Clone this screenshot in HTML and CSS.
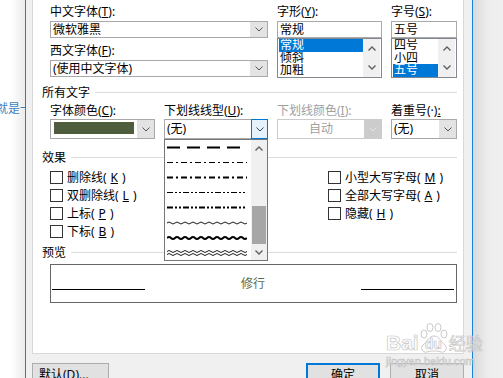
FILE: index.html
```html
<!DOCTYPE html>
<html lang="zh-CN">
<head>
  <meta charset="UTF-8" />
  <title>字体</title>
  <link rel="stylesheet" href="styles.css">
</head>
<body>
  <div class="doc"><p class="doc-text">就是一个</p></div>

  <div class="dialog">
    <div class="panel">
      <div class="font-row">
        <div class="col col-cn">
          <div class="label">中文字体(<u>T</u>):</div>
          <div class="combo">
            <span class="combo-text">微软雅黑</span>
            <span class="combo-btn"><svg width="8" height="5" viewBox="0 0 8 5"><path d="M0.5 0.5L4 4L7.5 0.5" fill="none" stroke="#555"/></svg></span>
          </div>
          <div class="label label-gap">西文字体(<u>F</u>):</div>
          <div class="combo">
            <span class="combo-text">(使用中文字体)</span>
            <span class="combo-btn"><svg width="8" height="5" viewBox="0 0 8 5"><path d="M0.5 0.5L4 4L7.5 0.5" fill="none" stroke="#555"/></svg></span>
          </div>
        </div>

        <div class="col col-style">
          <div class="label">字形(<u>Y</u>):</div>
          <div class="edit">常规</div>
          <div class="listbox">
            <ul class="list-items">
              <li class="selected">常规</li>
              <li>倾斜</li>
              <li>加粗</li>
            </ul>
            <div class="vscroll">
              <span><svg width="8" height="5" viewBox="0 0 8 5"><path d="M0.5 4.5L4 1L7.5 4.5" fill="none" stroke="#606060" stroke-width="1.4"/></svg></span>
              <span><svg width="8" height="5" viewBox="0 0 8 5"><path d="M0.5 0.5L4 4L7.5 0.5" fill="none" stroke="#606060" stroke-width="1.4"/></svg></span>
            </div>
          </div>
        </div>

        <div class="col col-size">
          <div class="label">字号(<u>S</u>):</div>
          <div class="edit">五号</div>
          <div class="listbox">
            <ul class="list-items">
              <li>四号</li>
              <li>小四</li>
              <li class="selected">五号</li>
            </ul>
            <div class="vscroll">
              <span><svg width="8" height="5" viewBox="0 0 8 5"><path d="M0.5 4.5L4 1L7.5 4.5" fill="none" stroke="#606060" stroke-width="1.4"/></svg></span>
              <span><svg width="8" height="5" viewBox="0 0 8 5"><path d="M0.5 0.5L4 4L7.5 0.5" fill="none" stroke="#606060" stroke-width="1.4"/></svg></span>
            </div>
          </div>
        </div>
      </div>

      <div class="group-title group-all">所有文字</div>

      <div class="attr-row">
        <div class="field">
          <div class="label">字体颜色(<u>C</u>):</div>
          <div class="combo combo-tall">
            <span class="swatch"></span>
            <span class="combo-btn"><svg width="8" height="5" viewBox="0 0 8 5"><path d="M0.5 0.5L4 4L7.5 0.5" fill="none" stroke="#555"/></svg></span>
          </div>
        </div>

        <div class="field">
          <div class="label">下划线线型(<u>U</u>):</div>
          <div class="combo combo-tall combo-open">
            <span class="combo-text">(无)</span>
            <span class="combo-btn focus"><svg width="8" height="5" viewBox="0 0 8 5"><path d="M0.5 0.5L4 4L7.5 0.5" fill="none" stroke="#444"/></svg></span>

            <div class="dropdown">
              <div class="dd-list">
                <div class="dd-item"><svg width="80" height="7"><line x1="0" y1="3.5" x2="80" y2="3.5" stroke="#000" stroke-width="2" stroke-dasharray="13 7"/></svg></div>
                <div class="dd-item"><svg width="80" height="7"><line x1="0" y1="3.5" x2="80" y2="3.5" stroke="#000" stroke-width="1" stroke-dasharray="6 3 2 3"/></svg></div>
                <div class="dd-item"><svg width="80" height="7"><line x1="0" y1="3.5" x2="80" y2="3.5" stroke="#000" stroke-width="2" stroke-dasharray="6 3 2 3"/></svg></div>
                <div class="dd-item"><svg width="80" height="7"><line x1="0" y1="3.5" x2="80" y2="3.5" stroke="#000" stroke-width="1" stroke-dasharray="6 2 2 2 2 2"/></svg></div>
                <div class="dd-item"><svg width="80" height="7"><line x1="0" y1="3.5" x2="80" y2="3.5" stroke="#000" stroke-width="2" stroke-dasharray="6 2 2 2 2 2"/></svg></div>
                <div class="dd-item"><svg width="80" height="7"><path d="M0 4q2-2 4 0t4 0t4 0t4 0t4 0t4 0t4 0t4 0t4 0t4 0t4 0t4 0t4 0t4 0t4 0t4 0t4 0t4 0t4 0t4 0" fill="none" stroke="#000" stroke-width="0.9"/></svg></div>
                <div class="dd-item"><svg width="80" height="7"><path d="M0 4q2-2 4 0t4 0t4 0t4 0t4 0t4 0t4 0t4 0t4 0t4 0t4 0t4 0t4 0t4 0t4 0t4 0t4 0t4 0t4 0t4 0" fill="none" stroke="#000" stroke-width="2"/></svg></div>
                <div class="dd-item"><svg width="80" height="7"><path d="M0 2.5q2-2 4 0t4 0t4 0t4 0t4 0t4 0t4 0t4 0t4 0t4 0t4 0t4 0t4 0t4 0t4 0t4 0t4 0t4 0t4 0t4 0M0 5.5q2-2 4 0t4 0t4 0t4 0t4 0t4 0t4 0t4 0t4 0t4 0t4 0t4 0t4 0t4 0t4 0t4 0t4 0t4 0t4 0t4 0" fill="none" stroke="#000" stroke-width="0.9"/></svg></div>
              </div>
              <div class="dd-scroll">
                <span class="dd-arrow"><svg width="8" height="5" viewBox="0 0 8 5"><path d="M0.5 4.5L4 1L7.5 4.5" fill="none" stroke="#606060" stroke-width="1.4"/></svg></span>
                <span class="dd-track"><span class="dd-thumb"></span></span>
                <span class="dd-arrow"><svg width="8" height="5" viewBox="0 0 8 5"><path d="M0.5 0.5L4 4L7.5 0.5" fill="none" stroke="#606060" stroke-width="1.4"/></svg></span>
              </div>
            </div>
          </div>
        </div>

        <div class="field">
          <div class="label disabled">下划线颜色(<u>I</u>):</div>
          <div class="combo combo-tall combo-disabled">
            <span class="combo-text centered">自动</span>
            <span class="combo-btn"><svg width="8" height="5" viewBox="0 0 8 5"><path d="M0.5 0.5L4 4L7.5 0.5" fill="none" stroke="#e6e6e6"/></svg></span>
          </div>
        </div>

        <div class="field">
          <div class="label">着重号(·)<u>:</u></div>
          <div class="combo combo-tall">
            <span class="combo-text">(无)</span>
            <span class="combo-btn"><svg width="8" height="5" viewBox="0 0 8 5"><path d="M0.5 0.5L4 4L7.5 0.5" fill="none" stroke="#555"/></svg></span>
          </div>
        </div>
      </div>

      <div class="group-title group-fx">效果</div>

      <div class="effects">
        <div class="check-col">
          <label class="check"><span class="box"></span>删除线(<u>K</u>)</label>
          <label class="check"><span class="box"></span>双删除线(<u>L</u>)</label>
          <label class="check"><span class="box"></span>上标(<u>P</u>)</label>
          <label class="check"><span class="box"></span>下标(<u>B</u>)</label>
        </div>
        <div class="check-col">
          <label class="check"><span class="box"></span>小型大写字母(<u>M</u>)</label>
          <label class="check"><span class="box"></span>全部大写字母(<u>A</u>)</label>
          <label class="check"><span class="box"></span>隐藏(<u>H</u>)</label>
        </div>
      </div>

      <div class="group-title group-pv">预览</div>

      <div class="preview">
        <span class="pv-line"></span>
        <span class="pv-text">修行</span>
        <span class="pv-line"></span>
      </div>
    </div>

    <div class="buttons">
      <div class="btn btn-default">默认(<u>D</u>)...</div>
      <div class="btn btn-ok">确定</div>
      <div class="btn btn-cancel">取消</div>
    </div>

    <div class="watermark">
      <div class="wm-logo">
        <span class="wm-bai">Bai</span>
        <span class="wm-paw">
          <svg width="30" height="30" viewBox="0 0 30 30">
            <ellipse cx="5" cy="11" rx="3" ry="4" fill="none" stroke="#c9c9c9"/>
            <ellipse cx="11" cy="4.5" rx="3" ry="4" fill="none" stroke="#c9c9c9"/>
            <ellipse cx="19" cy="4.5" rx="3" ry="4" fill="none" stroke="#c9c9c9"/>
            <ellipse cx="25" cy="11" rx="3" ry="4" fill="none" stroke="#c9c9c9"/>
            <path d="M15 13c-5 0-7 6-11 9c-3 3-1 8 4 7c3-1 5-1 7-1s4 0 7 1c5 1 7-4 4-7c-4-3-6-9-11-9z" fill="none" stroke="#c9c9c9"/>
          </svg>
          <span class="wm-du">du</span>
        </span>
        <span class="wm-cn">经验</span>
      </div>
      <div class="wm-url">jingyan.baidu.com</div>
    </div>
  </div>

  <div class="shade"></div>
</body>
</html>
```

FILE: styles.css
```css
* {
  box-sizing: border-box;
}

body {
  margin: 0;
  width: 503px;
  height: 378px;
  overflow: hidden;
  display: flex;
  font-family: "Noto Sans", "Noto Sans CJK SC", sans-serif;
  font-size: 12px;
  line-height: 15px;
  color: #000;
  background: #fff;
}

u {
  text-underline-offset: 1px;
}

/* document behind the dialog */
.doc {
  width: 25px;
  flex: none;
  overflow: hidden;
  background: linear-gradient(to right, #fff 45%, #ebebeb);
}

.doc-text {
  margin: 100px 0 0 -4px;
  white-space: nowrap;
  color: #3d7ebf;
  line-height: 17px;
}

.shade {
  flex: 1;
  background: linear-gradient(to right, #dadada, #ededed 50%, #f0f0f0);
}

/* dialog */
.dialog {
  position: relative;
  width: 448px;
  flex: none;
  background: #f0f0f0;
  border-left: 1px solid #1883d7;
  border-right: 1px solid #1883d7;
  padding: 0 8px 0 6px;
}

.panel {
  height: 354px;
  background: #fff;
  border: 1px solid #d9d9d9;
  border-top: none;
  padding: 4px 6px 0 9px;
}

.label {
  height: 15px;
  margin-bottom: 2px;
  white-space: nowrap;
}

.label.disabled {
  color: #a0a0a0;
}

.label-gap {
  margin-top: 5px;
}

/* font row */
.font-row {
  display: flex;
  gap: 9px;
  margin-left: 8px;
}

.col-cn {
  width: 218px;
}

.col-style {
  width: 105px;
}

.col-size {
  width: 66px;
}

.combo {
  display: flex;
  height: 17px;
  border: 1px solid #a9a9a9;
  background: #fff;
}

.combo-text {
  flex: 1;
  padding-left: 2px;
  white-space: nowrap;
  overflow: hidden;
}

.combo-text.centered {
  text-align: center;
  padding-left: 0;
}

.combo-btn {
  width: 17px;
  flex: none;
  background: #e3e3e3;
  display: flex;
  align-items: center;
  justify-content: center;
}

.edit {
  height: 17px;
  border: 1px solid #a9a9a9;
  padding-left: 2px;
}

.listbox {
  display: flex;
  height: 40px;
  border: 1px solid #828790;
  padding: 0 1px;
  overflow: hidden;
}

.list-items {
  flex: 1;
  margin: 0;
  padding: 0;
  list-style: none;
}

.list-items li {
  height: 12.5px;
  line-height: 12px;
  padding-left: 1px;
  overflow: hidden;
}

.list-items li.selected {
  background: #0078d7;
  color: #fff;
}

.vscroll {
  width: 17px;
  display: flex;
  flex-direction: column;
  background: #f0f0f0;
}

.vscroll span {
  flex: 1;
  display: flex;
  align-items: center;
  justify-content: center;
}

/* group headings */
.group-title {
  display: flex;
  align-items: center;
  gap: 5px;
  height: 15px;
  white-space: nowrap;
}

.group-title::after {
  content: "";
  flex: 1;
  height: 1px;
  background: #dcdcdc;
}

.group-all {
  margin-top: 7px;
}

.group-fx {
  margin-top: 11px;
}

.group-pv {
  margin-top: 5px;
}

/* all text row */
.attr-row {
  display: grid;
  grid-template-columns: 105px 104px 105px 66px;
  column-gap: 9px;
  margin: 3px 0 0 8px;
}

.attr-row .label {
  margin-bottom: 1px;
}

.combo-tall {
  height: 20px;
  line-height: 18px;
}

.swatch {
  flex: 1;
  margin: 2px 3px 4px 3px;
  background: #4f5d3f;
}

.combo-open {
  position: relative;
}

.combo-btn.focus {
  width: 17px;
  margin: -1px -1px -1px 0;
  background: #e5f1fb;
  border: 1px solid #0078d7;
}

.combo-disabled {
  border-color: #cccccc;
  color: #a0a0a0;
}

.combo-disabled .combo-btn {
  background: #cccccc;
}

/* open dropdown of underline styles */
.dropdown {
  position: absolute;
  left: -1px;
  top: 19px;
  width: 104px;
  height: 122px;
  display: flex;
  background: #fff;
  border: 1px solid #767676;
  z-index: 2;
}

.dd-list {
  flex: 1;
  padding-left: 2px;
}

.dd-item {
  height: 15px;
  display: flex;
  align-items: center;
}

.dd-item svg {
  display: block;
}

.dd-scroll {
  width: 16px;
  display: flex;
  flex-direction: column;
  background: #f0f0f0;
}

.dd-arrow {
  height: 16px;
  display: flex;
  align-items: center;
  justify-content: center;
}

.dd-track {
  flex: 1;
  display: flex;
  flex-direction: column;
  justify-content: flex-end;
}

.dd-thumb {
  height: 38px;
  margin: 0 1px;
  background: #a6a6a6;
}

/* effects */
.effects {
  display: grid;
  grid-template-columns: 278px 1fr;
  margin: 3px 0 0 8px;
}

.check {
  display: flex;
  align-items: center;
  gap: 4px;
  height: 18px;
  white-space: nowrap;
}

.box {
  width: 13px;
  height: 13px;
  border: 1px solid #333;
  background: #fff;
}

/* preview */
.preview {
  display: flex;
  align-items: center;
  height: 39px;
  margin: 4px 0 0 8px;
  padding: 0 2px 0 1px;
  border: 1px solid #666;
}

.pv-line {
  width: 93px;
  height: 1px;
  margin-top: 11px;
  background: #000;
}

.pv-text {
  flex: 1;
  text-align: center;
  color: #5b6b4b;
}

/* bottom buttons */
.buttons {
  display: flex;
  margin-top: 9px;
}

.btn {
  height: 23px;
  line-height: 21px;
  background: #e1e1e1;
  border: 1px solid #adadad;
  white-space: nowrap;
}

.btn-default {
  width: 77px;
  padding-left: 6px;
}

.btn-ok {
  width: 74px;
  margin-left: auto;
  text-align: center;
  border: 2px solid #0078d7;
  line-height: 19px;
}

.btn-cancel {
  width: 74px;
  margin-left: 10px;
  text-align: center;
}

/* baidu watermark */
.watermark {
  position: absolute;
  left: 360px;
  top: 323px;
  width: 110px;
  white-space: nowrap;
  color: rgba(255, 255, 255, 0.7);
  -webkit-text-stroke: 0.7px #c6c6c6;
  font-family: "Liberation Sans", sans-serif;
  pointer-events: none;
}

.wm-logo {
  display: flex;
  align-items: flex-end;
  height: 30px;
}

.wm-bai {
  font-size: 21px;
  font-weight: bold;
  line-height: 20px;
}

.wm-paw {
  position: relative;
  flex: none;
  width: 30px;
  height: 30px;
}

.wm-paw svg {
  display: block;
}

.wm-du {
  position: absolute;
  left: 6px;
  top: 14px;
  font-size: 14px;
  font-weight: bold;
  line-height: 14px;
}

.wm-cn {
  flex: none;
  font-family: "Noto Sans CJK SC", sans-serif;
  font-size: 17px;
  line-height: 20px;
}

.wm-url {
  font-size: 11px;
  line-height: 12px;
  margin-top: 2px;
}
```
